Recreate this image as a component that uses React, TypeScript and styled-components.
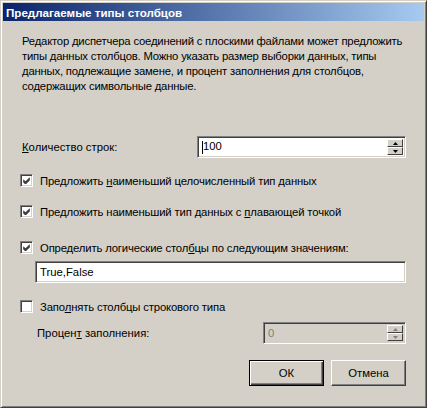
import React from "react";
import styled, { createGlobalStyle, css } from "styled-components";

const Global = createGlobalStyle`
  html, body { margin: 0; padding: 0; background: #d4d0c8; }
  body { font-family: "Liberation Sans", Arial, sans-serif; font-size: 11.3px; color: #000; }
`;

const Window = styled.div`
  box-sizing: border-box;
  width: 427px;
  height: 408px;
  background: #d4d0c8;
  border-top: 1px solid #d4d0c8;
  border-left: 1px solid #d4d0c8;
  border-right: 1px solid #404040;
  border-bottom: 1px solid #404040;
  box-shadow: inset 1px 1px 0 #fff, inset -1px -1px 0 #808080;
  padding: 2px;
  display: flex;
  flex-direction: column;
`;

const TitleBar = styled.div`
  height: 18px;
  background: linear-gradient(to right, #0a246a, #a6caf0);
  color: #fff;
  font-weight: bold;
  font-size: 11.6px;
  display: flex;
  align-items: center;
  padding-left: 3px;
`;

const Body = styled.div`
  flex: 1;
  display: flex;
  flex-direction: column;
  padding: 13px 18px 0 19px;
`;

const Intro = styled.div`
  display: flex;
  flex-direction: column;
  line-height: 15px;
  letter-spacing: -0.2px;
`;

const IntroLine = styled.span`
  white-space: nowrap;
`;

const FieldRow = styled.div<{ $indent?: number; $top: number }>`
  display: flex;
  align-items: center;
  justify-content: space-between;
  margin-top: ${p => p.$top}px;
  padding-left: ${p => p.$indent || 0}px;
`;

const sunken = css`
  box-sizing: border-box;
  border-top: 1px solid #808080;
  border-left: 1px solid #808080;
  border-right: 1px solid #fff;
  border-bottom: 1px solid #fff;
  box-shadow: inset 1px 1px 0 #404040, inset -1px -1px 0 #d4d0c8;
`;

const Field = styled.div<{ $width: number; $disabled?: boolean }>`
  ${sunken};
  width: ${p => p.$width}px;
  height: 22px;
  background: ${p => (p.$disabled ? "#d4d0c8" : "#fff")};
  color: ${p => (p.$disabled ? "#808080" : "#000")};
  display: flex;
  align-items: center;
  padding: 2px 2px 2px 4px;
`;

const Value = styled.span`
  flex: 1;
`;

const Caret = styled.span`
  display: inline-block;
  width: 1px;
  height: 13px;
  background: #000;
  vertical-align: middle;
`;

const SpinBox = styled.div`
  display: flex;
  flex-direction: column;
  width: 16px;
  height: 100%;
`;

const SpinHalf = styled.div`
  flex: 1;
  box-sizing: border-box;
  background: #d4d0c8;
  border-top: 1px solid #fff;
  border-left: 1px solid #fff;
  border-right: 1px solid #404040;
  border-bottom: 1px solid #404040;
  display: flex;
  align-items: center;
  justify-content: center;
`;

const Arrow = ({ up, color }: { up?: boolean; color: string }) => (
  <svg width="5" height="3" viewBox="0 0 5 3">
    <polygon points={up ? "2.5,0 5,3 0,3" : "0,0 5,0 2.5,3"} fill={color} />
  </svg>
);

const Spin = ({ disabled }: { disabled?: boolean }) => {
  const c = disabled ? "#808080" : "#000";
  return (
    <SpinBox>
      <SpinHalf><Arrow up color={c} /></SpinHalf>
      <SpinHalf><Arrow color={c} /></SpinHalf>
    </SpinBox>
  );
};

const CheckRow = styled.label<{ $top: number }>`
  display: flex;
  align-items: center;
  gap: 7px;
  margin-top: ${p => p.$top}px;
  margin-left: -2px;
  height: 17px;
  letter-spacing: -0.15px;
`;

const Box = styled.span`
  ${sunken};
  width: 13px;
  height: 13px;
  background: #fff;
  display: flex;
  align-items: center;
  justify-content: center;
`;

const Check = ({ on }: { on: boolean }) => (
  <Box>
    {on && (
      <svg width="7" height="7" viewBox="0 0 7 7">
        <path d="M0 2.5 L2.5 5 L7 0.5 M0 3.5 L2.5 6 L7 1.5 M0 4.5 L2.5 7 L7 2.5" stroke="#000" strokeWidth="1" fill="none" />
      </svg>
    )}
  </Box>
);

const Key = styled.u`
  text-decoration: underline;
`;

const Buttons = styled.div`
  display: flex;
  justify-content: flex-end;
  gap: 7px;
  margin-top: 16px;
`;

const Button = styled.button<{ $default?: boolean }>`
  box-sizing: border-box;
  width: 75px;
  height: 26px;
  font-family: inherit;
  font-size: 11.3px;
  color: #000;
  background: #d4d0c8;
  padding: 0;
  border-top: 1px solid #fff;
  border-left: 1px solid #fff;
  border-right: 1px solid #404040;
  border-bottom: 1px solid #404040;
  box-shadow: inset -1px -1px 0 #808080;
  ${p =>
    p.$default &&
    css`
      border: 1px solid #000;
      box-shadow: inset 1px 1px 0 #fff, inset -1px -1px 0 #404040, inset -2px -2px 0 #808080;
    `}
`;

const intro = [
  "Редактор диспетчера соединений с плоскими файлами может предложить",
  "типы данных столбцов. Можно указать размер выборки данных, типы",
  "данных, подлежащие замене, и процент заполнения для столбцов,",
  "содержащих символьные данные.",
];

export default function App() {
  return (
    <>
      <Global />
      <Window>
        <TitleBar>Предлагаемые типы столбцов</TitleBar>
        <Body>
          <Intro>
            {intro.map(line => (
              <IntroLine key={line}>{line}</IntroLine>
            ))}
          </Intro>

          <FieldRow $top={42}>
            <span><Key>К</Key>оличество строк:</span>
            <Field $width={209}>
              <Value><Caret />100</Value>
              <Spin />
            </Field>
          </FieldRow>

          <CheckRow $top={14}>
            <Check on />
            <span>Предложить <Key>н</Key>аименьший целочисленный тип данных</span>
          </CheckRow>
          <CheckRow $top={14}>
            <Check on />
            <span>Предложить наименьший тип данных с <Key>п</Key>лавающей точкой</span>
          </CheckRow>
          <CheckRow $top={19}>
            <Check on />
            <span>Определить логические стол<Key>б</Key>цы по следующим значениям:</span>
          </CheckRow>

          <FieldRow $top={5} $indent={13}>
            <Field $width={371}>
              <Value>True,False</Value>
            </Field>
          </FieldRow>

          <CheckRow $top={15}>
            <Check on={false} />
            <span>Запо<Key>л</Key>нять столбцы строкового типа</span>
          </CheckRow>

          <FieldRow $top={7} $indent={15}>
            <span>Процен<Key>т</Key> заполнения:</span>
            <Field $width={143} $disabled>
              <Value>0</Value>
              <Spin disabled />
            </Field>
          </FieldRow>

          <Buttons>
            <Button $default>ОК</Button>
            <Button>Отмена</Button>
          </Buttons>
        </Body>
      </Window>
    </>
  );
}
